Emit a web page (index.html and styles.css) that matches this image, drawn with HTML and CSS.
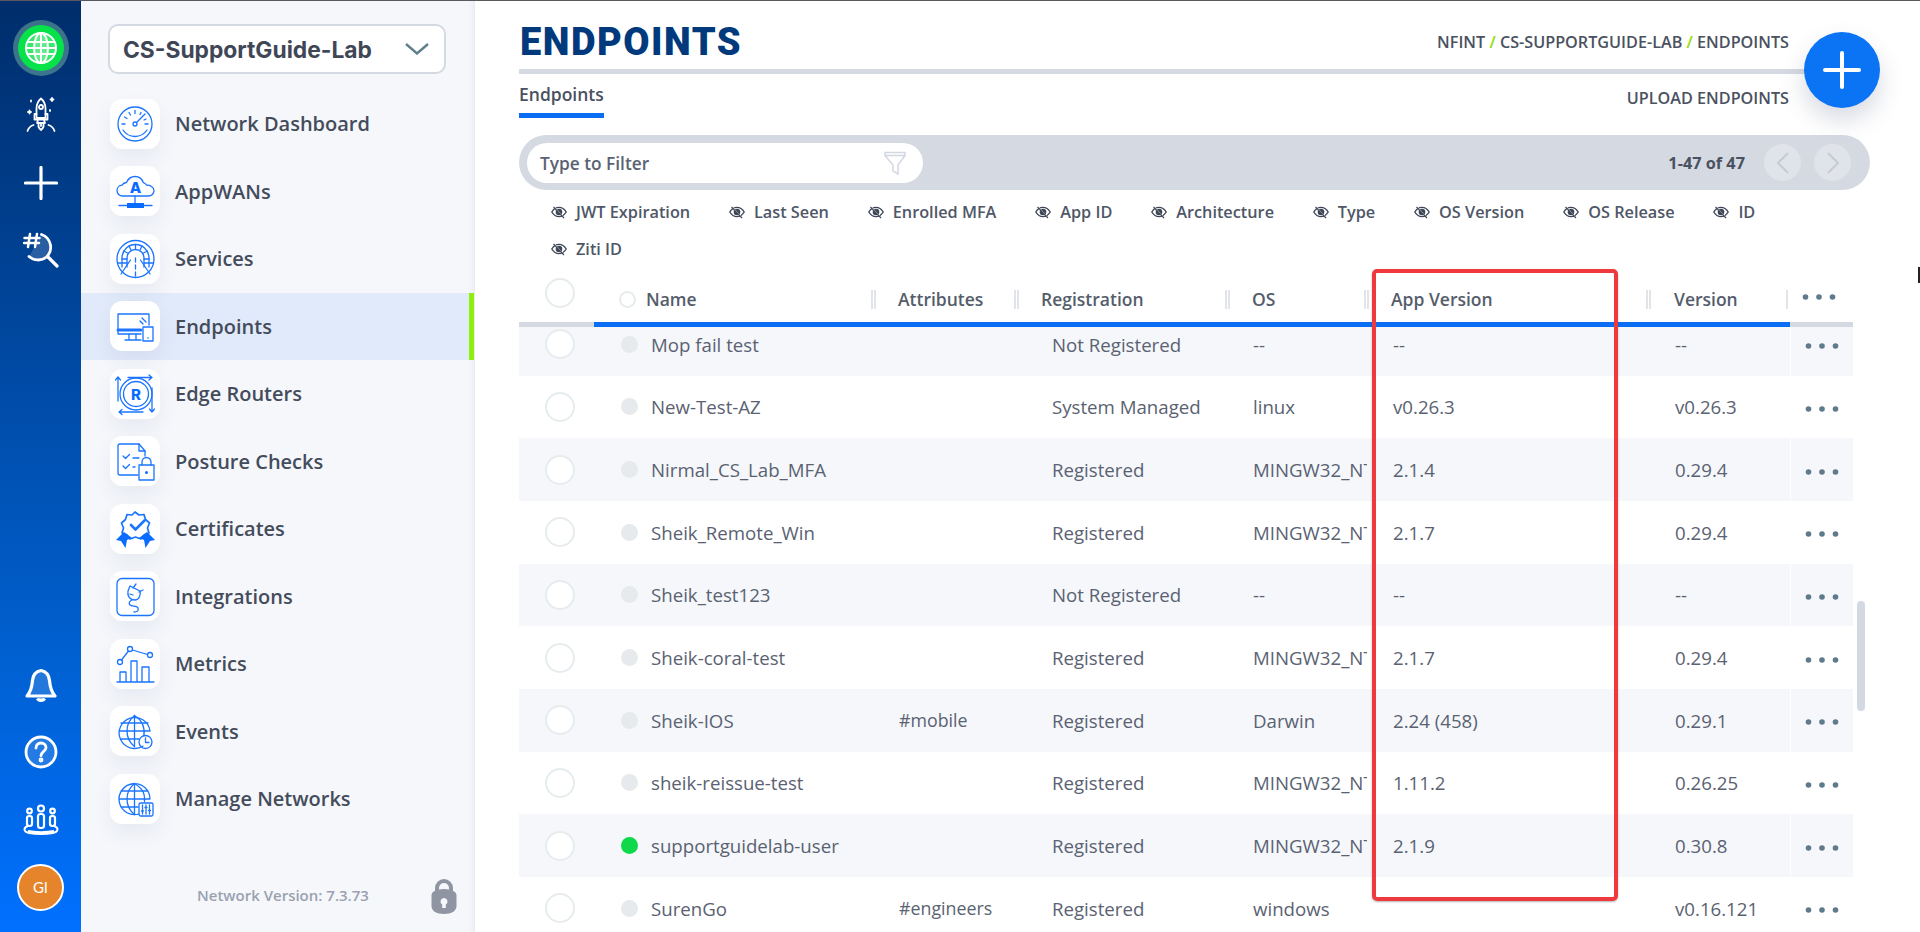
FILE: index.html
```html
<!DOCTYPE html>
<html lang="en">
<head>
    <meta charset="UTF-8">
    <meta name="viewport" content="width=device-width, initial-scale=1.0">
    <title>Endpoints</title>
    <link rel="stylesheet" href="styles.css">
</head>

<body>
    <svg class="defs" width="0" height="0" aria-hidden="true">
        <symbol id="eye" viewBox="0 0 16 16">
            <path d="M.8 8C2.6 5 5 3.4 8 3.4S13.400 5 15.200 8C13.400 11 11 12.600 8 12.600S2.600 11 .8 8z" fill="none" stroke="currentColor" stroke-width="1.400"/>
            <circle cx="8" cy="8" r="3.300" fill="currentColor"/>
            <path d="M3 2.500l10 11" stroke="#fff" stroke-width="1"/>
            <path d="M2.500 3l10.500 11" stroke="currentColor" stroke-width="1.100"/>
        </symbol>
        <symbol id="dots" viewBox="0 0 34 8">
            <circle cx="3.500" cy="4" r="2.800"/>
            <circle cx="17" cy="4" r="2.800"/>
            <circle cx="30.500" cy="4" r="2.800"/>
        </symbol>
    </svg>

    <aside class="rail">
        <div class="rail-item">
            <span class="globe-badge">
                <svg width="34" height="34" viewBox="0 0 34 34" fill="rgba(255,255,255,.2)" stroke="#fff" stroke-width="2">
                    <circle cx="17" cy="17" r="15"/>
                    <ellipse cx="17" cy="17" rx="7" ry="15"/>
                    <path d="M17 2v30M3.500 11h27M2 17h30M3.500 23h27"/>
                </svg>
            </span>
        </div>
        <div class="rail-item">
            <svg width="30" height="36" viewBox="0 0 30 36" fill="none" stroke="#fff" stroke-width="1.800" stroke-linecap="round" stroke-linejoin="round">
                <path d="M15 1.500c3 2.500 4.500 6 4.500 10V21h-9v-9.500c0-4 1.500-7.500 4.500-10z"/>
                <circle cx="15" cy="10" r="2"/>
                <path d="M10.500 17H8.500v5.500h13V17h-2M12 23l-1 3h8l-1-3"/>
                <path d="M15 26v3M12.500 27.500c-.5 2.500 1 4.500 2.500 5.500 1.500-1 3-3 2.500-5.500"/>
                <path d="M1.500 34c1-3 3-5 6-6M28.500 34c-1-3-3-5-6-6"/>
                <path d="M26 1v3M24.500 2.500h3M3.500 13.500v3M2 15h3M5 3.500v1M24 13v1"/>
            </svg>
        </div>
        <div class="rail-item">
            <svg width="34" height="34" viewBox="0 0 34 34" stroke="#fff" stroke-width="3.200" stroke-linecap="round">
                <path d="M17 1.500v31M1.500 17h31"/>
            </svg>
        </div>
        <div class="rail-item">
            <svg width="36" height="36" viewBox="0 0 36 36" fill="none" stroke="#fff" stroke-linecap="round">
                <path d="M18.500 2.500a13.500 13.500 0 0 1 5 22.500 13.500 13.500 0 0 1-17.500-.5" fill="rgba(255,255,255,.16)" stroke-width="2.800"/>
                <path d="M25 25l9 9" stroke-width="3.200"/>
                <path d="M7 2L5 15M14 2l-2 13M1.500 6H16.500M1 11h15" stroke-width="2.500"/>
            </svg>
        </div>

        <div class="rail-bottom">
            <div class="rail-item">
                <svg width="32" height="34" viewBox="0 0 32 34" fill="rgba(255,255,255,.14)" stroke="#fff" stroke-width="3.200" stroke-linejoin="round">
                    <path d="M16 2.500c5.500 1 8 5 8.500 10 .5 6 1.500 11 5.500 15.500H2c4-4.500 5-9.500 5.500-15.500.5-5 3-9 8.500-10z"/>
                    <path d="M12.500 30.500c1 2.500 6 2.500 7 0" fill="#fff"/>
                </svg>
            </div>
            <div class="rail-item">
                <svg width="34" height="34" viewBox="0 0 34 34" fill="rgba(255,255,255,.14)" stroke="#fff" stroke-width="2.800" stroke-linecap="round">
                    <circle cx="17" cy="17" r="15"/>
                    <path d="M12 13c0-3 2.200-5 5-5s5 2 5 4.700c0 3.500-5 3.800-5 8" fill="none"/>
                    <circle cx="17" cy="25" r="1" fill="none"/>
                </svg>
            </div>
            <div class="rail-item">
                <svg width="36" height="32" viewBox="0 0 36 32" fill="none" stroke="#fff" stroke-width="2.200">
                    <circle cx="18" cy="4.500" r="3"/>
                    <circle cx="6.500" cy="7" r="2.300"/>
                    <circle cx="29.500" cy="7" r="2.300"/>
                    <rect x="15" y="10" width="6" height="14" rx="2.500"/>
                    <rect x="4" y="12" width="5" height="10" rx="2.200"/>
                    <rect x="27" y="12" width="5" height="10" rx="2.200"/>
                    <path d="M5 22c-5 1.500-4.500 6 1 7 7 1.300 17 1.300 24 0 5.500-1 6-5.500 1-7M5 27c7 1.500 19 1.500 26 0" stroke-width="2"/>
                </svg>
            </div>
            <div class="rail-item">
                <span class="avatar">GI</span>
            </div>
        </div>
    </aside>

    <nav class="side">
        <div class="network-select">
            <span>CS-SupportGuide-Lab</span>
            <svg width="24" height="12" viewBox="0 0 24 12" fill="none" stroke="#5f7f8f" stroke-width="2.400">
                <path d="M1 1l11 9.500L23 1"/>
            </svg>
        </div>

        <ul class="nav-list">
            <li class="nav-item">
                <span class="nav-tile">
                    <svg class="nav-icon" viewBox="0 0 50 50">
                        <circle cx="25" cy="25" r="17"/>
                        <path d="M13 31c3 4.500 7 6.500 12 6.500s9-2 12-6.500"/>
                        <circle cx="25" cy="25" r="2"/>
                        <path d="M26.500 23.500L35 15M12 25h3M35 25h3M14.500 18l2.500 1.500M19 13.500l1.500 2.500M25 11.500v3M31 13.500l-1 2M36 20l-2 1"/>
                    </svg>
                </span>
                Network Dashboard
            </li>
            <li class="nav-item">
                <span class="nav-tile">
                    <svg class="nav-icon" viewBox="0 0 50 50">
                        <path d="M12.500 30C9.500 30 7 27.600 7 24.600c0-2.900 2.200-5.200 5-5.400 1-1.600 2.600-2.600 4.500-2.700C18 13 21.200 10.500 25 10.500c4 0 7.200 2.600 8.200 6.200 1.400.2 2.700 1.200 3.400 2.500 3.200-.2 7.400 2 7.400 5.400 0 3-2.500 5.400-5.500 5.400z"/>
                        <text class="icon-letter" x="25.500" y="27" text-anchor="middle">A</text>
                        <path d="M25 30v7M9 39.500h33"/>
                        <rect class="icon-fill" x="17" y="37" width="17" height="5"/>
                    </svg>
                </span>
                AppWANs
            </li>
            <li class="nav-item">
                <span class="nav-tile">
                    <svg class="nav-icon" viewBox="0 0 50 50">
                        <circle cx="25.500" cy="25" r="18.500"/>
                        <path d="M12 33V24a13.500 13.500 0 0 1 27 0v9"/>
                        <path d="M17 33V24a8.500 8.500 0 0 1 17 0v9"/>
                        <path d="M17.500 19l-4-2M21 16l-2-4M25.500 15v-4.500M30 16l2-4M33.500 19l4-2M8 29h9M34 29h9M12 25l5 0M34 25l5 0"/>
                        <path d="M20.500 26L11 40M30.500 26L40 40"/>
                        <path d="M25.500 24v19" stroke-dasharray="4 3"/>
                    </svg>
                </span>
                Services
            </li>
            <li class="nav-item nav-item-active">
                <span class="nav-tile">
                    <svg class="nav-icon" viewBox="0 0 50 50">
                        <path d="M31 33H8V13h31v11"/>
                        <path d="M8 29h23" stroke-width="3"/>
                        <path d="M19 33v5M26 33v5M15 39h16M32 17l4 4M30 20l3 3"/>
                        <rect x="33" y="26" width="10" height="14"/>
                        <circle class="icon-fill" cx="38" cy="37" r=".8"/>
                    </svg>
                </span>
                Endpoints
            </li>
            <li class="nav-item">
                <span class="nav-tile">
                    <svg class="nav-icon" viewBox="0 0 50 50">
                        <circle cx="26" cy="25" r="16"/>
                        <circle cx="26" cy="25" r="12.500"/>
                        <text class="icon-letter" x="26" y="31" text-anchor="middle">R</text>
                        <path d="M18 8.500h24M39 6l3 2.500L39 11M8 8v24M5.500 11L8 8l2.500 3M42 19v24M39.500 40l2.500 3 2.500-3M9 43h24M12 40.500L9 43l3 2.500"/>
                    </svg>
                </span>
                Edge Routers
            </li>
            <li class="nav-item">
                <span class="nav-tile">
                    <svg class="nav-icon" viewBox="0 0 50 50">
                        <path d="M28 39H10a2 2 0 0 1-2-2V10a2 2 0 0 1 2-2h19l6 7v5"/>
                        <path d="M29 8v7h6"/>
                        <path d="M13 20l2.500 2.500 4-4M13 30l2.500 2.500 4-4M23 22h6M23 31h2"/>
                        <rect x="29" y="29" width="15" height="15"/>
                        <path d="M32 29v-3a4.500 4.500 0 0 1 9 0v3"/>
                        <circle class="icon-fill" cx="36.500" cy="36.500" r="1.500"/>
                    </svg>
                </span>
                Posture Checks
            </li>
            <li class="nav-item">
                <span class="nav-tile">
                    <svg class="nav-icon" viewBox="0 0 50 50">
                        <path d="M25 8l4 3 5-.5 1.500 5 4 3.500-2 5 1.500 5-5 2-3 4-5.500-2-5.500 2-3-4-5-2 1.500-5-2-5 4-3.500 1.500-5 5 .5z" stroke-width="1.700"/>
                        <path d="M21 21l4.500 4.500 9-9" stroke-width="2.600"/>
                        <path class="icon-fill" d="M6 36l8-8 8 6-5 2-1.500 8-4.500-7zM45 36l-8-8-8 6 5 2 1.500 8 4.500-7z"/>
                    </svg>
                </span>
                Certificates
            </li>
            <li class="nav-item">
                <span class="nav-tile">
                    <svg class="nav-icon" viewBox="0 0 50 50" stroke-width="1.600">
                        <rect x="7" y="7.500" width="37" height="37" rx="5"/>
                        <path d="M20 15l10 5c1 4-1 9-5 9-5 0-8-4-7-9z"/>
                        <path d="M23 17l3-4M29 21l4-2M20 23l3 1"/>
                        <path d="M22 29c-2 1-4 3-2 5s7 0 8 3-1 4-4 4"/>
                    </svg>
                </span>
                Integrations
            </li>
            <li class="nav-item">
                <span class="nav-tile">
                    <svg class="nav-icon" viewBox="0 0 50 50" stroke-width="1.700">
                        <circle cx="10" cy="23" r="2.500"/>
                        <circle cx="20" cy="10" r="2.500"/>
                        <circle cx="40" cy="16" r="2.500"/>
                        <path d="M11.500 21l7-9M22.500 11l15 4.500"/>
                        <path d="M7 43h37M10 43V33h6v10M21 43V22h6v21M32 43V28h7v15"/>
                    </svg>
                </span>
                Metrics
            </li>
            <li class="nav-item">
                <span class="nav-tile">
                    <svg class="nav-icon" viewBox="0 0 50 50">
                        <path d="M33 40A15.500 15.500 0 1 1 40 25M24.500 9.500v31M9 25h31M11 17h27M11 33h18"/>
                        <path d="M24.500 9.500c-10 8-10 23 0 31M24.500 9.500c8 5 10.500 12 9.500 20"/>
                        <circle cx="35.500" cy="36" r="6.500"/>
                        <path d="M35.500 32v4.500h3.500"/>
                    </svg>
                </span>
                Events
            </li>
            <li class="nav-item">
                <span class="nav-tile">
                    <svg class="nav-icon" viewBox="0 0 50 50">
                        <path d="M29 40A15.500 15.500 0 1 1 40 25M24.500 9.500v31M9 25h31M11 17h27M11 33h17"/>
                        <path d="M24.500 9.500c-10 8-10 23 0 31M24.500 9.500c8 5 10.500 9 10 18"/>
                        <rect x="29" y="29" width="14" height="13" rx="1.500"/>
                        <path d="M32.500 31v9M36 31v9M39.500 31v9M31.500 37h2M35 33.500h2M38.500 36.500h2"/>
                    </svg>
                </span>
                Manage Networks
            </li>
        </ul>

        <div class="side-footer">
            <span class="network-version">Network Version: 7.3.73</span>
            <svg width="26" height="37" viewBox="0 0 26 37" fill="#8f95a3">
                <path d="M4 15V11a9 9 0 0 1 18 0v4h-4V11a5 5 0 0 0-10 0v4z"/>
                <path fill-rule="evenodd" d="M13 12c8 0 12.500 3 12.500 6v11c0 5-5 8-12.500 8S.5 34 .5 29V18c0-3 4.500-6 12.500-6zm0 9a3.500 3.500 0 0 0-1.800 6.500V31h3.600v-3.500A3.500 3.500 0 0 0 13 21z"/>
            </svg>
        </div>
    </nav>

    <main class="main">
        <header class="page-head">
            <h1 class="page-title">ENDPOINTS</h1>
            <div class="breadcrumb">NFINT <i>/</i> CS-SUPPORTGUIDE-LAB <i>/</i> ENDPOINTS</div>
        </header>

        <div class="tab-row">
            <span class="tab">Endpoints</span>
            <span class="upload-link">UPLOAD ENDPOINTS</span>
        </div>

        <div class="filter-bar">
            <div class="filter-input">
                <span class="filter-text">Type to Filter</span>
                <svg width="22" height="24" viewBox="0 0 22 24" fill="none" stroke="#d3d7df" stroke-width="1.500">
                    <path d="M1 1.500h20v3L14 14v9l-5-3v-6L1 4.500zM1 4.500h20"/>
                </svg>
            </div>
            <div class="pager">
                <span class="pager-count">1-47 of 47</span>
                <span class="pager-button">
                    <svg width="14" height="24" viewBox="0 0 14 24" fill="none" stroke="#c5cad4" stroke-width="2"><path d="M12 2L2 12l10 10"/></svg>
                </span>
                <span class="pager-button">
                    <svg width="14" height="24" viewBox="0 0 14 24" fill="none" stroke="#c5cad4" stroke-width="2"><path d="M2 2l10 10L2 22"/></svg>
                </span>
            </div>
        </div>

        <div class="column-toggles">
            <span class="toggle"><svg class="eye"><use href="#eye"/></svg>JWT Expiration</span>
            <span class="toggle"><svg class="eye"><use href="#eye"/></svg>Last Seen</span>
            <span class="toggle"><svg class="eye"><use href="#eye"/></svg>Enrolled MFA</span>
            <span class="toggle"><svg class="eye"><use href="#eye"/></svg>App ID</span>
            <span class="toggle"><svg class="eye"><use href="#eye"/></svg>Architecture</span>
            <span class="toggle"><svg class="eye"><use href="#eye"/></svg>Type</span>
            <span class="toggle"><svg class="eye"><use href="#eye"/></svg>OS Version</span>
            <span class="toggle"><svg class="eye"><use href="#eye"/></svg>OS Release</span>
            <span class="toggle"><svg class="eye"><use href="#eye"/></svg>ID</span>
            <span class="toggle"><svg class="eye"><use href="#eye"/></svg>Ziti ID</span>
        </div>

        <div class="table">
            <div class="table-head">
                <span class="ring"></span>
                <span class="th th-name"><span class="name-ring"></span>Name</span>
                <span class="th">Attributes</span>
                <span class="th">Registration</span>
                <span class="th">OS</span>
                <span class="th">App Version</span>
                <span class="th">Version</span>
                <span class="th-menu"><svg class="dots"><use href="#dots"/></svg></span>
            </div>
            <div class="table-rule">
                <span class="rule-grey rule-start"></span>
                <span class="rule-blue"></span>
                <span class="rule-grey rule-end"></span>
            </div>

            <div class="table-body">
                <div class="row">
                    <span class="ring"></span>
                    <span class="td-name"><span class="dot"></span>Mop fail test</span>
                    <span class="td"></span>
                    <span class="td td-reg">Not Registered</span>
                    <span class="td td-os">--</span>
                    <span class="td">--</span>
                    <span class="td">--</span>
                    <span class="td-menu"><svg class="dots"><use href="#dots"/></svg></span>
                </div>
                <div class="row">
                    <span class="ring"></span>
                    <span class="td-name"><span class="dot"></span>New-Test-AZ</span>
                    <span class="td"></span>
                    <span class="td td-reg">System Managed</span>
                    <span class="td td-os">linux</span>
                    <span class="td">v0.26.3</span>
                    <span class="td">v0.26.3</span>
                    <span class="td-menu"><svg class="dots"><use href="#dots"/></svg></span>
                </div>
                <div class="row">
                    <span class="ring"></span>
                    <span class="td-name"><span class="dot"></span>Nirmal_CS_Lab_MFA</span>
                    <span class="td"></span>
                    <span class="td td-reg">Registered</span>
                    <span class="td td-os">MINGW32_NT</span>
                    <span class="td">2.1.4</span>
                    <span class="td">0.29.4</span>
                    <span class="td-menu"><svg class="dots"><use href="#dots"/></svg></span>
                </div>
                <div class="row">
                    <span class="ring"></span>
                    <span class="td-name"><span class="dot"></span>Sheik_Remote_Win</span>
                    <span class="td"></span>
                    <span class="td td-reg">Registered</span>
                    <span class="td td-os">MINGW32_NT</span>
                    <span class="td">2.1.7</span>
                    <span class="td">0.29.4</span>
                    <span class="td-menu"><svg class="dots"><use href="#dots"/></svg></span>
                </div>
                <div class="row">
                    <span class="ring"></span>
                    <span class="td-name"><span class="dot"></span>Sheik_test123</span>
                    <span class="td"></span>
                    <span class="td td-reg">Not Registered</span>
                    <span class="td td-os">--</span>
                    <span class="td">--</span>
                    <span class="td">--</span>
                    <span class="td-menu"><svg class="dots"><use href="#dots"/></svg></span>
                </div>
                <div class="row">
                    <span class="ring"></span>
                    <span class="td-name"><span class="dot"></span>Sheik-coral-test</span>
                    <span class="td"></span>
                    <span class="td td-reg">Registered</span>
                    <span class="td td-os">MINGW32_NT</span>
                    <span class="td">2.1.7</span>
                    <span class="td">0.29.4</span>
                    <span class="td-menu"><svg class="dots"><use href="#dots"/></svg></span>
                </div>
                <div class="row">
                    <span class="ring"></span>
                    <span class="td-name"><span class="dot"></span>Sheik-IOS</span>
                    <span class="td td-attr">#mobile</span>
                    <span class="td td-reg">Registered</span>
                    <span class="td td-os">Darwin</span>
                    <span class="td">2.24 (458)</span>
                    <span class="td">0.29.1</span>
                    <span class="td-menu"><svg class="dots"><use href="#dots"/></svg></span>
                </div>
                <div class="row">
                    <span class="ring"></span>
                    <span class="td-name"><span class="dot"></span>sheik-reissue-test</span>
                    <span class="td"></span>
                    <span class="td td-reg">Registered</span>
                    <span class="td td-os">MINGW32_NT</span>
                    <span class="td">1.11.2</span>
                    <span class="td">0.26.25</span>
                    <span class="td-menu"><svg class="dots"><use href="#dots"/></svg></span>
                </div>
                <div class="row">
                    <span class="ring"></span>
                    <span class="td-name"><span class="dot dot-online"></span>supportguidelab-user</span>
                    <span class="td"></span>
                    <span class="td td-reg">Registered</span>
                    <span class="td td-os">MINGW32_NT</span>
                    <span class="td">2.1.9</span>
                    <span class="td">0.30.8</span>
                    <span class="td-menu"><svg class="dots"><use href="#dots"/></svg></span>
                </div>
                <div class="row">
                    <span class="ring"></span>
                    <span class="td-name"><span class="dot"></span>SurenGo</span>
                    <span class="td td-attr">#engineers</span>
                    <span class="td td-reg">Registered</span>
                    <span class="td td-os">windows</span>
                    <span class="td"></span>
                    <span class="td">v0.16.121</span>
                    <span class="td-menu"><svg class="dots"><use href="#dots"/></svg></span>
                </div>
            </div>
        </div>

        <span class="scroll-thumb"></span>
    </main>

    <button class="fab" type="button" aria-label="Add endpoint">
        <svg width="38" height="38" viewBox="0 0 38 38" stroke="#fff" stroke-width="4" stroke-linecap="round">
            <path d="M19 2v34M2 19h34"/>
        </svg>
    </button>
    <div class="highlight-box"></div>
    <span class="cursor-mark"></span>
</body>
</html>
```

FILE: styles.css
```css
* {
    box-sizing: border-box;
}

html, body {
    height: 100%;
}

body {
    position: relative;
    display: flex;
    height: 932px;
    margin: 0;
    overflow: hidden;
    border-top: 1px solid #5a5a5e;
    background-color: #fff;
    font-family: "Open Sans", "Liberation Sans", sans-serif;
    color: #5a6272;
}

.defs {
    position: absolute;
}

/* left rail */
.rail {
    display: flex;
    flex-direction: column;
    flex: 0 0 81px;
    padding: 13px 0 11px;
    background: linear-gradient(180deg, #002d6b 0%, #0060d0 70%, #0070ff 100%);
}

.rail-item {
    display: flex;
    align-items: center;
    justify-content: center;
    height: 67.5px;
}

.rail-bottom {
    margin-top: auto;
}

.globe-badge {
    display: flex;
    align-items: center;
    justify-content: center;
    width: 46px;
    height: 46px;
    border-radius: 50%;
    background: #06e24a;
    box-shadow: 0 0 0 5px rgba(110, 170, 160, .55);
}

.avatar {
    display: flex;
    align-items: center;
    justify-content: center;
    width: 47px;
    height: 47px;
    border: 2px solid #fff;
    border-radius: 50%;
    background: #e5842a;
    color: #fff;
    font-family: "Lato", sans-serif;
    font-size: 15px;
}

/* network menu */
.side {
    display: flex;
    flex-direction: column;
    flex: 0 0 394px;
    padding-top: 23px;
    background: #f5f7fb;
    box-shadow: inset -6px 0 6px -5px rgba(60, 70, 90, .1);
}

.network-select {
    display: flex;
    align-items: center;
    justify-content: space-between;
    width: 338px;
    height: 50px;
    margin-left: 27px;
    padding: 0 15px 0 13px;
    border: 2px solid #d5d9e2;
    border-radius: 10px;
    background: #fff;
    color: #3f4757;
    font-family: "Inter", sans-serif;
    font-size: 22.800px;
    font-weight: 700;
}

.nav-list {
    margin: 16px 0 0;
    padding: 0;
    list-style: none;
}

.nav-item {
    display: flex;
    align-items: center;
    gap: 15px;
    height: 67.5px;
    padding-left: 29px;
    color: #444c5c;
    font-size: 20px;
    font-weight: 600;
}

.nav-item-active {
    width: 393px;
    border-right: 5px solid #8fee0a;
    background: #e1eafa;
}

.nav-tile {
    flex: 0 0 50px;
    width: 50px;
    height: 50px;
    border-radius: 12px;
    background: #fff;
    box-shadow: 0 10px 20px rgba(60, 70, 110, .07);
}

.nav-icon {
    display: block;
    width: 50px;
    height: 50px;
    fill: none;
    stroke: #1a74ff;
    stroke-width: 1.300;
    stroke-linecap: round;
    stroke-linejoin: round;
}

.icon-fill {
    fill: #0a6cff;
    stroke: none;
}

.icon-letter {
    fill: #0a6cff;
    stroke: none;
    font-family: "Inter", sans-serif;
    font-size: 15px;
    font-weight: 800;
}

.side-footer {
    display: flex;
    align-items: center;
    justify-content: space-between;
    margin-top: 44px;
    padding: 0 18px 0 116px;
}

.network-version {
    color: #9aa1b0;
    font-size: 15px;
    font-weight: 600;
}

/* main content */
.main {
    position: relative;
    flex: 1;
    min-width: 0;
    padding: 0 50px 0 44px;
}

.page-head {
    display: flex;
    align-items: center;
    justify-content: space-between;
    height: 73px;
    padding: 13px 81px 0 0;
    border-bottom: 5px solid #d5d9e2;
}

.page-title {
    margin: 0 0 0 1px;
    color: #003a7d;
    font-family: "Roboto", sans-serif;
    font-size: 38px;
    font-weight: 900;
    letter-spacing: 1.500px;
}

.breadcrumb {
    color: #4a5160;
    font-size: 16.200px;
    font-weight: 600;
}

.breadcrumb i {
    color: #8fe000;
    font-style: normal;
}

.tab-row {
    display: flex;
    justify-content: space-between;
    height: 44px;
    padding-right: 81px;
}

.tab {
    padding-top: 8px;
    border-bottom: 5px solid #0a6ef5;
    color: #4a5160;
    font-size: 17.500px;
    font-weight: 600;
}

.upload-link {
    padding-top: 13px;
    color: #4a5160;
    font-size: 16.200px;
    font-weight: 600;
}

.filter-bar {
    display: flex;
    align-items: center;
    justify-content: space-between;
    height: 55px;
    margin-top: 17px;
    padding: 0 19px 0 8px;
    border-radius: 28px;
    background: #d5d9e2;
}

.filter-input {
    display: flex;
    align-items: center;
    justify-content: space-between;
    width: 396px;
    height: 40px;
    padding: 0 17px 0 13px;
    border-radius: 20px;
    background: #fff;
    color: #5a6272;
    font-size: 17.300px;
    font-weight: 600;
}

.filter-text {
    padding-top: 2px;
}

.pager {
    display: flex;
    align-items: center;
    gap: 13px;
}

.pager-count {
    margin-right: 6px;
    color: #4a5160;
    font-size: 16.300px;
    font-weight: 700;
}

.pager-button {
    display: flex;
    align-items: center;
    justify-content: center;
    width: 37px;
    height: 37px;
    border-radius: 50%;
    background: #e0e4ea;
}

.column-toggles {
    display: flex;
    flex-wrap: wrap;
    gap: 0 38.800px;
    width: 1334px;
    margin-top: 3px;
    padding-left: 32px;
}

.toggle {
    display: flex;
    align-items: center;
    gap: 9px;
    height: 37px;
    color: #4f5767;
    font-size: 16.300px;
    font-weight: 600;
}

.eye {
    width: 16px;
    height: 16px;
    color: #3f4757;
}

/* table */
.table {
    width: 1334px;
    margin-top: 4px;
}

.table-head, .row {
    display: grid;
    grid-template-columns: 100px 252px 143px 211px 139px 282px 144px 63px;
    align-items: center;
}

.table-head {
    height: 51px;
    padding-top: 5px;
    color: #555d6b;
    font-size: 17.500px;
    font-weight: 600;
}

.ring {
    width: 30px;
    height: 30px;
    margin-left: 26px;
    border: 2px solid #e6ecee;
    border-radius: 50%;
    background: #fff;
}

.table-head .ring {
    margin-top: -12px;
}

.th {
    height: 19px;
    padding-left: 22px;
    border-left: 5px double #e1e4e9;
    line-height: 19px;
}

.th:nth-child(7) {
    padding-left: 23px;
}

.th-name {
    display: flex;
    align-items: center;
    gap: 10px;
    padding-left: 0;
    border-left: 0;
}

.name-ring {
    width: 17px;
    height: 17px;
    border: 2px solid #e6ecee;
    border-radius: 50%;
}

.th-menu {
    display: flex;
    align-items: center;
    height: 19px;
    margin-left: -4px;
    padding-left: 14px;
    border-left: 2px solid #e1e4e9;
}

.dots {
    display: block;
    width: 34px;
    height: 8px;
    fill: #5f7a8a;
}

.table-head .dots {
    margin-top: -5px;
}

.table-rule {
    display: flex;
    height: 5px;
}

.rule-grey {
    background: #d5d9e2;
}

.rule-start {
    flex: 0 0 75px;
}

.rule-end {
    flex: 0 0 63px;
}

.rule-blue {
    flex: 1;
    background: #0a6ef5;
}

.table-body {
    height: 604px;
    overflow: hidden;
}

.row {
    height: 62.67px;
    font-size: 18.670px;
}

.row:first-child {
    margin-top: -14px;
}

.row:nth-child(odd) {
    background: #f5f7fb;
}

.td {
    overflow: hidden;
    padding-left: 29px;
    white-space: nowrap;
}

.td-attr {
    padding-left: 28px;
    font-size: 17.800px;
}

.td-reg {
    padding-left: 38px;
}

.td-os {
    margin-right: -3px;
    padding-left: 28px;
}

.td-name {
    display: flex;
    align-items: center;
    gap: 13px;
    padding-left: 2px;
    white-space: nowrap;
}

.dot {
    width: 17px;
    height: 17px;
    border-radius: 50%;
    background: #e6eaec;
}

.dot-online {
    background: #0fd84a;
}

.td-menu {
    display: flex;
    align-items: center;
    height: 100%;
    padding: 4px 0 0 14px;
    border-left: 1px solid #fff;
}

.scroll-thumb {
    position: absolute;
    top: 600px;
    left: 1382px;
    width: 8px;
    height: 110px;
    border-radius: 4px;
    background: #d3d9e2;
}

/* things lying over the page */
.fab {
    position: absolute;
    top: 31px;
    left: 1804px;
    display: flex;
    align-items: center;
    justify-content: center;
    width: 76px;
    height: 76px;
    padding: 0;
    border: 0;
    border-radius: 50%;
    background: #0a74f5;
    box-shadow: 0 12px 24px rgba(60, 70, 110, .2);
}

.highlight-box {
    position: absolute;
    top: 268px;
    left: 1372px;
    width: 246px;
    height: 632px;
    border: 4px solid #ee3a3f;
    border-radius: 5px;
    box-shadow: 0 1px 2px rgba(0, 0, 0, .3);
}

.cursor-mark {
    position: absolute;
    top: 266px;
    right: 0;
    width: 2px;
    height: 16px;
    background: #222;
}
```
